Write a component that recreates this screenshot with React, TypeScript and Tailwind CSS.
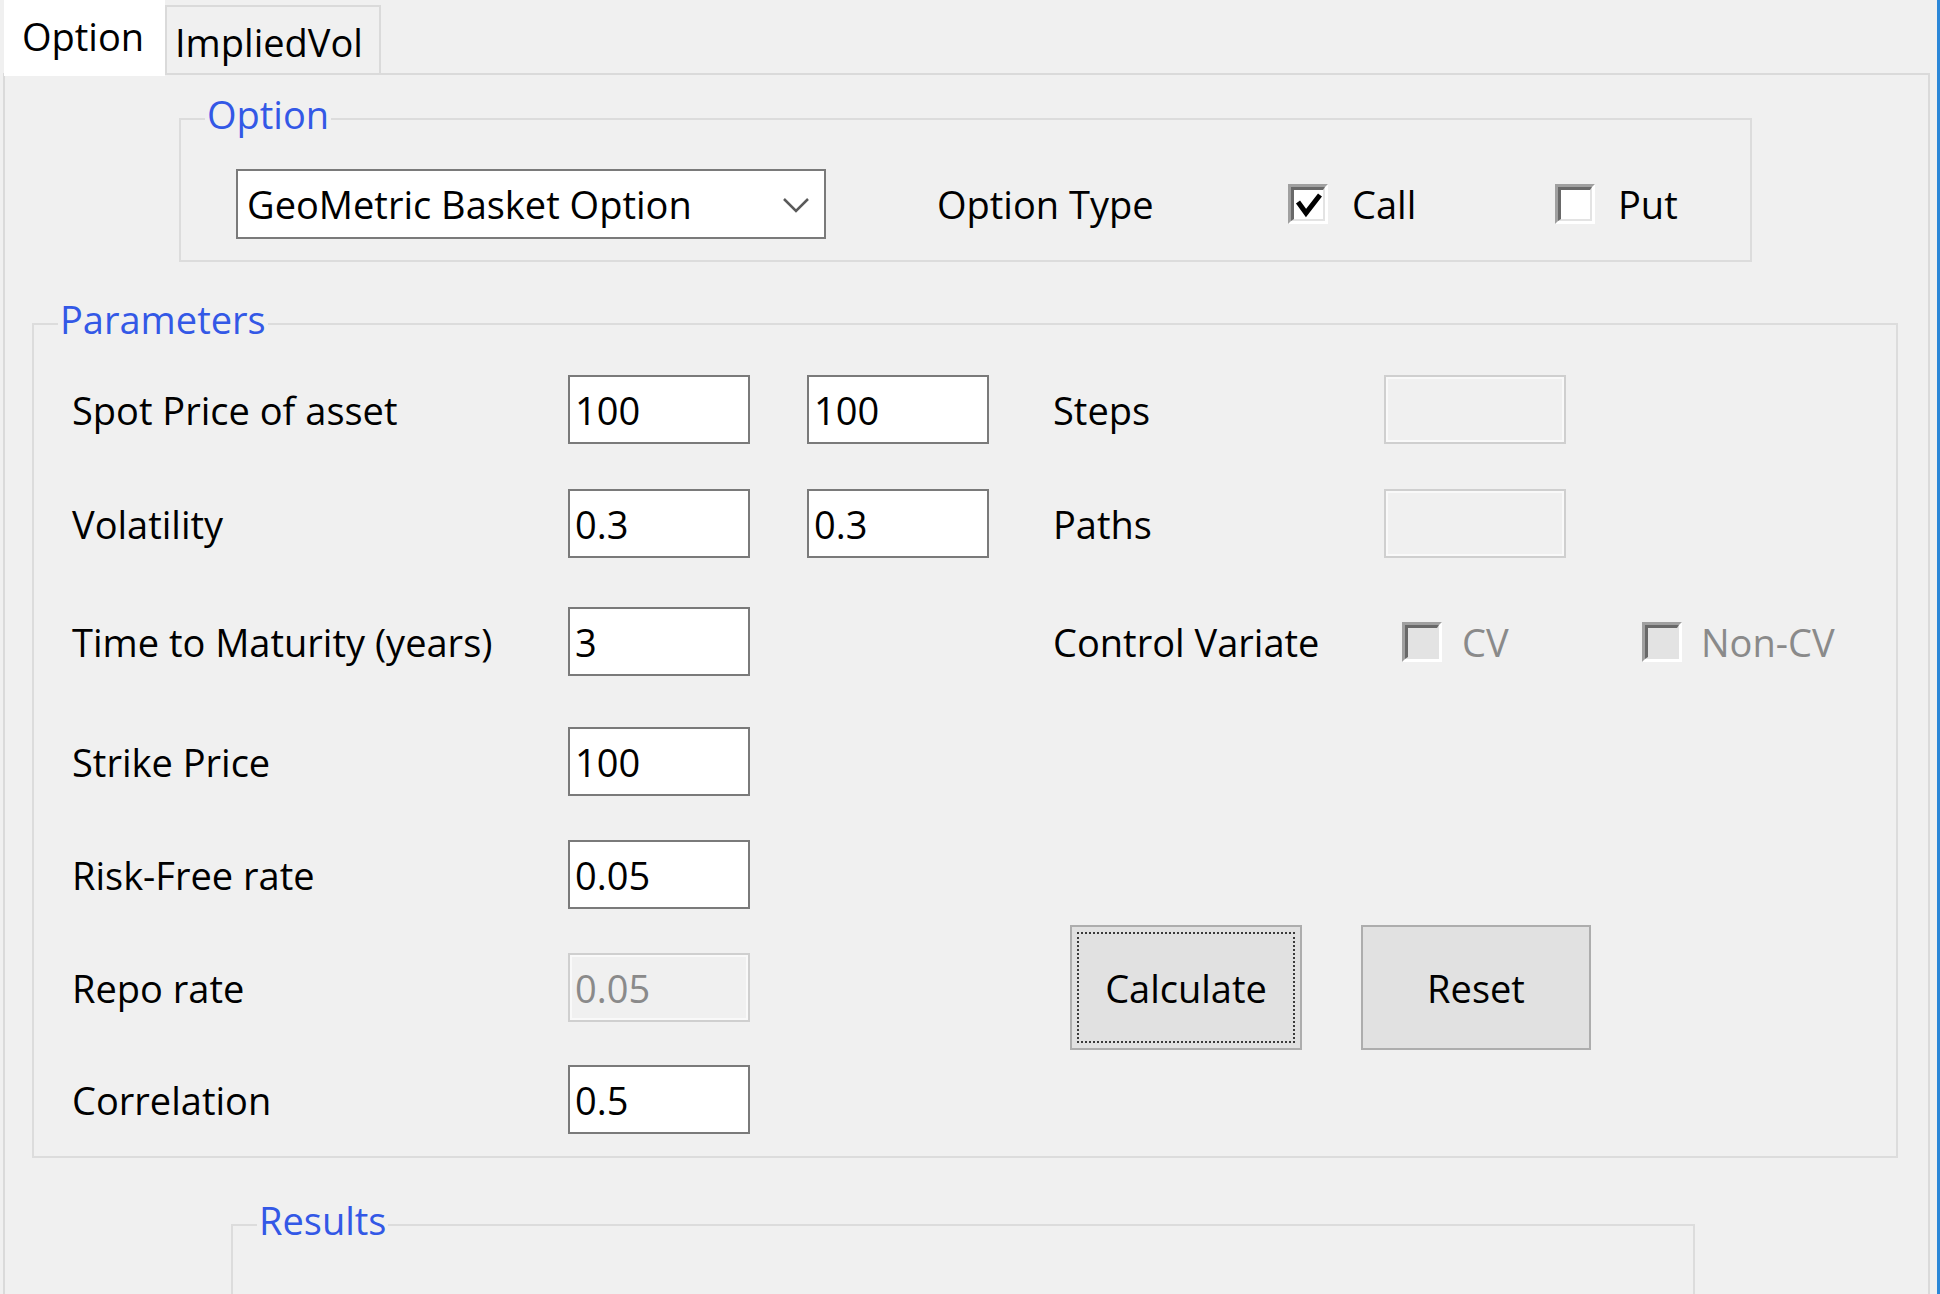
import React from 'react';

type BoxProps = { title: string; className: string; children?: React.ReactNode };

const GroupBox: React.FC<BoxProps> = ({ title, className, children }) => (
    <div className={`relative border-2 border-[#dcdcdc] ${className}`}>
        <span className="absolute -top-[25px] left-[24px] bg-[#f0f0f0] px-[2px] text-[#3358e6]">{title}</span>
        {children}
    </div>
);

const TextBox: React.FC<{ value?: string; disabled?: boolean }> = ({ value, disabled }) => (
    <div
        className={`flex h-[69px] w-[182px] items-center border-2 pl-[5px] ${
            disabled
                ? 'border-[#cfcfcf] bg-[#f0f0f0] text-[#8a8a8a] shadow-[inset_0_0_0_2px_#f9f9f9]'
                : 'border-[#7a7a7a] bg-white text-black'
        }`}
    >
        {value}
    </div>
);

const CheckBox: React.FC<{ checked?: boolean; disabled?: boolean }> = ({ checked, disabled }) => (
    <div className="h-[40px] w-[40px] shrink-0 border-[3px] border-t-[#a0a0a0] border-l-[#a0a0a0] border-r-white border-b-white">
        <div
            className={`h-full w-full border-t-[3px] border-l-[3px] border-r-[2px] border-b-[2px] border-t-[#696969] border-l-[#696969] border-r-[#e3e3e3] border-b-[#e3e3e3] ${
                disabled ? 'bg-[#e3e3e3]' : 'bg-white'
            }`}
        >
            {checked && (
                <svg width="29" height="29" viewBox="0 0 29 29" fill="none">
                    <path d="M4 12 L12 23 L26 5" stroke="#000" strokeWidth="5" />
                </svg>
            )}
        </div>
    </div>
);

const Cell: React.FC<{ children?: React.ReactNode }> = ({ children }) => (
    <div className="flex h-[69px] items-center">{children}</div>
);

const rows = [
    { label: 'Spot Price of asset', a: '100', b: '100' },
    { label: 'Volatility', a: '0.3', b: '0.3' },
    { label: 'Time to Maturity (years)', a: '3' },
    { label: 'Strike Price', a: '100' },
    { label: 'Risk-Free rate', a: '0.05' },
    { label: 'Repo rate', a: '0.05', disabled: true },
    { label: 'Correlation', a: '0.5' },
];

const App: React.FC = () => {
    return (
        <div className="flex h-[1294px] w-[1940px] overflow-hidden bg-[#f0f0f0] font-['Open_Sans',sans-serif] text-[38px] leading-none text-black">
            <div className="w-[1937px]">
                {/* tab strip */}
                <div className="flex h-[73px] items-start pl-[4px]">
                    <div className="relative z-10 h-[76px] w-[161px] bg-white pl-[18px] pt-[17px]">Option</div>
                    <div className="mt-[5px] h-[68px] w-[216px] border-2 border-b-0 border-[#dadada] pl-[8px] pt-[16px]">
                        ImpliedVol
                    </div>
                </div>

                {/* tab page */}
                <div className="ml-[3px] h-[1300px] w-[1927px] border-2 border-b-0 border-[#dadada]">
                    <GroupBox title="Option" className="ml-[174px] mt-[43px] h-[144px] w-[1573px]">
                        <div className="flex items-center pl-[55px] pt-[49px]">
                            <div className="relative flex h-[70px] w-[590px] items-center border-2 border-[#7a7a7a] bg-white pl-[9px]">
                                GeoMetric Basket Option
                                <svg
                                    className="absolute right-[14px] top-[26px]"
                                    width="28"
                                    height="16"
                                    viewBox="0 0 28 16"
                                    fill="none"
                                >
                                    <path d="M2 2 L14 14 L26 2" stroke="#5a5a5a" strokeWidth="2.5" />
                                </svg>
                            </div>
                            <div className="ml-[111px] w-[351px]">Option Type</div>
                            <div className="flex w-[267px] items-center gap-[24px]">
                                <CheckBox checked />
                                <span>Call</span>
                            </div>
                            <div className="flex items-center gap-[23px]">
                                <CheckBox />
                                <span>Put</span>
                            </div>
                        </div>
                    </GroupBox>

                    <GroupBox title="Parameters" className="ml-[27px] mt-[61px] h-[835px] w-[1866px]">
                        <div className="grid grid-cols-[496px_239px_246px_1fr] grid-rows-[114px_118px_120px_113px_113px_112px_69px] pl-[38px] pt-[50px]">
                            {rows.map((r, i) => (
                                <React.Fragment key={r.label}>
                                    <Cell>{r.label}</Cell>
                                    <Cell>
                                        <TextBox value={r.a} disabled={r.disabled} />
                                    </Cell>
                                    <Cell>{r.b && <TextBox value={r.b} />}</Cell>
                                    <Cell>
                                        {i === 0 && (
                                            <>
                                                <div className="w-[331px]">Steps</div>
                                                <TextBox disabled />
                                            </>
                                        )}
                                        {i === 1 && (
                                            <>
                                                <div className="w-[331px]">Paths</div>
                                                <TextBox disabled />
                                            </>
                                        )}
                                        {i === 2 && (
                                            <>
                                                <div className="w-[349px]">Control Variate</div>
                                                <div className="flex w-[240px] items-center gap-[20px]">
                                                    <CheckBox disabled />
                                                    <span className="text-[#8a8a8a]">CV</span>
                                                </div>
                                                <div className="flex items-center gap-[19px]">
                                                    <CheckBox disabled />
                                                    <span className="text-[#8a8a8a]">Non-CV</span>
                                                </div>
                                            </>
                                        )}
                                        {i === 5 && (
                                            <div className="ml-[17px] flex items-center gap-[59px]">
                                                <button className="h-[125px] w-[232px] border-2 border-[#adadad] bg-[#e1e1e1] p-[5px]">
                                                    <div className="flex h-full w-full items-center justify-center border-2 border-dotted border-[#3a3a3a]">
                                                        Calculate
                                                    </div>
                                                </button>
                                                <button className="flex h-[125px] w-[230px] items-center justify-center border-2 border-[#adadad] bg-[#e1e1e1]">
                                                    Reset
                                                </button>
                                            </div>
                                        )}
                                    </Cell>
                                </React.Fragment>
                            ))}
                        </div>
                    </GroupBox>

                    <GroupBox title="Results" className="ml-[226px] mt-[66px] h-[200px] w-[1464px]" />
                </div>
            </div>
            <div className="w-[3px] bg-[#2b87d8]" />
        </div>
    );
};

export default App;
